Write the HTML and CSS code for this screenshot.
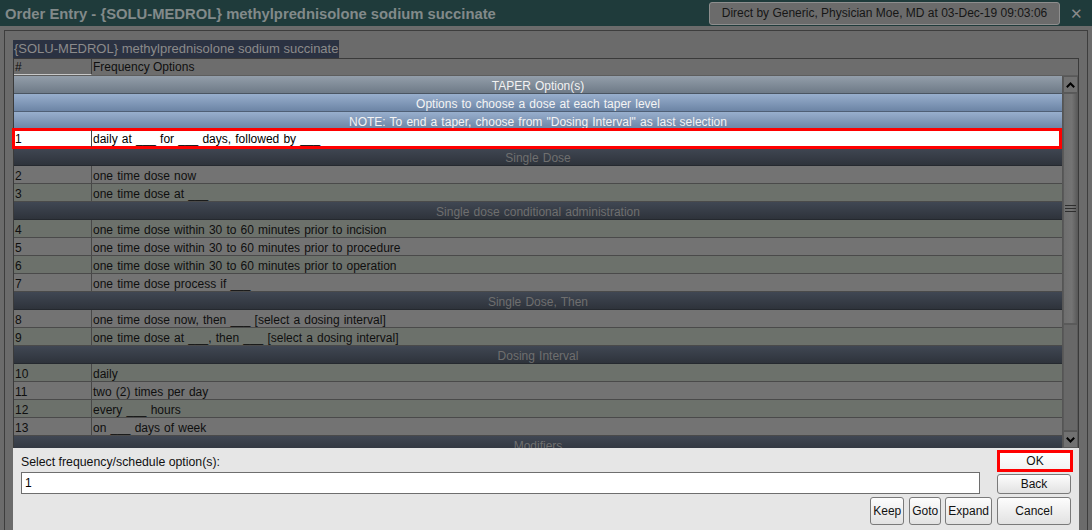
FILE: index.html
```html
<!DOCTYPE html>
<html>
<head>
<meta charset="utf-8">
<title>Order Entry</title>
<link rel="stylesheet" href="styles.css">
</head>
<body>
<div class="titlebar">
  <div class="title">Order Entry - {SOLU-MEDROL} methylprednisolone sodium succinate</div>
  <div class="tb-right">
    <div class="ctx-btn">Direct by Generic, Physician Moe, MD at 03-Dec-19 09:03:06</div>
    <span class="close">✕</span>
  </div>
</div>
<div class="frame">
  <div class="drug"><span class="drug-label">{SOLU-MEDROL} methylprednisolone sodium succinate</span></div>
  <div class="table">
    <div class="thead">
      <div class="c1">#</div>
      <div class="c2">Frequency Options</div>
    </div>
    <div class="tbody">
      <div class="rows">
        <div class="sec taper">TAPER Option(s)</div>
        <div class="sec blue">Options to choose a dose at each taper level</div>
        <div class="sec blue">NOTE: To end a taper, choose from "Dosing Interval" as last selection</div>
        <div class="row selected"><div class="c1">1</div><div class="c2">daily at ___ for ___ days, followed by ___</div></div>
        <div class="sec dark">Single Dose</div>
        <div class="row gray"><div class="c1">2</div><div class="c2">one time dose now</div></div>
        <div class="row green"><div class="c1">3</div><div class="c2">one time dose at ___</div></div>
        <div class="sec dark">Single dose conditional administration</div>
        <div class="row green"><div class="c1">4</div><div class="c2">one time dose within 30 to 60 minutes prior to incision</div></div>
        <div class="row gray"><div class="c1">5</div><div class="c2">one time dose within 30 to 60 minutes prior to procedure</div></div>
        <div class="row green"><div class="c1">6</div><div class="c2">one time dose within 30 to 60 minutes prior to operation</div></div>
        <div class="row gray"><div class="c1">7</div><div class="c2">one time dose process if ___</div></div>
        <div class="sec dark">Single Dose, Then</div>
        <div class="row gray"><div class="c1">8</div><div class="c2">one time dose now, then ___ [select a dosing interval]</div></div>
        <div class="row green"><div class="c1">9</div><div class="c2">one time dose at ___, then ___ [select a dosing interval]</div></div>
        <div class="sec dark">Dosing Interval</div>
        <div class="row green"><div class="c1">10</div><div class="c2">daily</div></div>
        <div class="row gray"><div class="c1">11</div><div class="c2">two (2) times per day</div></div>
        <div class="row green"><div class="c1">12</div><div class="c2">every ___ hours</div></div>
        <div class="row gray"><div class="c1">13</div><div class="c2">on ___ days of week</div></div>
        <div class="sec dark">Modifiers</div>
      </div>
      <div class="scrollbar">
        <div class="sb-btn">
          <svg width="9" height="6" viewBox="0 0 9 6"><polyline points="0.8,5.2 4.5,1.5 8.2,5.2" fill="none" stroke="#000" stroke-width="2"/></svg>
        </div>
        <div class="sb-thumb">
          <svg width="11" height="8" viewBox="0 0 11 8"><path d="M0 0.5H11M0 3.5H11M0 6.5H11" stroke="#2e2e2e" stroke-width="1"/></svg>
        </div>
        <div class="sb-track"></div>
        <div class="sb-btn">
          <svg width="9" height="6" viewBox="0 0 9 6"><polyline points="0.8,0.8 4.5,4.5 8.2,0.8" fill="none" stroke="#000" stroke-width="2"/></svg>
        </div>
      </div>
    </div>
  </div>
  <div class="bottom">
    <div class="label">Select frequency/schedule option(s):</div>
    <button class="btn ok">OK</button>
    <div class="input">1</div>
    <button class="btn back">Back</button>
    <div class="actions">
      <button class="btn small">Keep</button>
      <button class="btn small goto">Goto</button>
      <button class="btn small">Expand</button>
    </div>
    <button class="btn cancel">Cancel</button>
  </div>
</div>
</body>
</html>
```
FILE: styles.css
```css
* { box-sizing: border-box; }
html, body {
  margin: 0;
  padding: 0;
  width: 1092px;
  height: 530px;
  overflow: hidden;
  background: #6b6b6b;
  font-family: "Liberation Sans", Arial, sans-serif;
  font-size: 12px;
  color: #0f0f0f;
}

/* title bar */
.titlebar {
  height: 26px;
  background: #1f3b3b;
  display: flex;
  align-items: center;
  justify-content: space-between;
  padding: 0 9px 0 5px;
}
.title {
  font-size: 14.8px;
  font-weight: bold;
  color: #828a8a;
  padding-top: 1px;
}
.tb-right {
  display: flex;
  align-items: center;
  gap: 10px;
}
.ctx-btn {
  height: 23px;
  width: 351px;
  margin-top: 1px;
  background: #6b6b6b;
  border: 1px solid #8e8e8e;
  border-radius: 3px;
  color: #161616;
  font-size: 12px;
  line-height: 21px;
  text-align: center;
}
.close {
  color: #8a8a8a;
  font-size: 15px;
  line-height: 1;
}

/* main frame */
.frame {
  margin: 4px 4px 0 4px;
  height: 500px;
  border: 1px solid #3d3d3d;
  border-bottom: none;
  padding: 9px 8px 0 8px;
  overflow: hidden;
}
.drug {
  height: 18px;
  display: flex;
}
.drug-label {
  background: #2b3242;
  color: #8b8b8b;
  font-size: 13px;
  line-height: 18px;
  padding: 0 1px 0 1px;
}

/* table */
.table {
  border-top: 1px solid #3a3a3a;
  border-left: 1px solid #3a3a3a;
  border-right: 1px solid #3a3a3a;
}
.thead {
  display: flex;
  height: 17px;
  background: #6d6d6d;
  border-bottom: 1px solid #5d5d5d;
  line-height: 16px;
}
.thead .c1 {
  width: 78px;
  border-right: 1px solid #3f3f3f;
  border-bottom: 1px solid #c8c8c8;
  padding-left: 1px;
}
.thead .c2 { padding-left: 1px; }

.tbody {
  display: flex;
  height: 372px;
}
.rows {
  flex: 1;
  height: 372px;
  clip-path: inset(0 0 0 -3px);
  display: flex;
  flex-direction: column;
  word-spacing: 0.8px;
}
.row, .sec {
  flex: none;
  height: 18px;
  border-bottom: 1px solid #4a4a4a;
  padding-top: 2px;
  line-height: 16px;
}
.row { display: flex; }
.row .c1 {
  width: 78px;
  border-right: 1px solid #474747;
  padding-left: 1px;
  margin-top: -2px;
  padding-top: 2px;
}
.row .c2 { padding-left: 1px; }
.row.gray { background: #737373; }
.row.green { background: #6c716b; }
.row.selected {
  background: #ffffff;
  color: #000;
  position: relative;
  z-index: 0;
  padding-top: 1px;
}
.row.selected .c1 { margin-top: -1px; padding-top: 1px; }
.row.selected::after {
  content: "";
  position: absolute;
  z-index: -1;
  left: -2px;
  right: 0;
  top: -2px;
  bottom: -2px;
  border: 3px solid #ff0000;
}
.sec { text-align: center; }
.sec.taper {
  background: linear-gradient(#939eaa, #6e7a87);
  color: #f2f2f2;
  border-bottom-color: #4a5562;
}
.sec.blue {
  background: linear-gradient(#98afcd, #6c84a5);
  color: #f4f4f4;
  border-bottom-color: #4f5f75;
}
.sec.dark {
  background: linear-gradient(#404753, #2e333b);
  color: #6f6f6f;
  border-bottom-color: #25292f;
}

/* scrollbar */
.scrollbar {
  width: 16px;
  display: flex;
  flex-direction: column;
  background: #676767;
  border-left: 1px solid #555;
}
.sb-btn {
  height: 17px;
  background: #717171;
  border: 1px solid #585858;
  display: flex;
  align-items: center;
  justify-content: center;
}
.sb-thumb {
  height: 231px;
  background: linear-gradient(90deg, #6e6e6e 0, #747474 60%, #5c5c5c 100%);
  border: 1px solid #5a5a5a;
  display: flex;
  align-items: center;
  justify-content: center;
}
.sb-track {
  flex: 1;
  background: #686868;
  border: 1px solid #5a5a5a;
}

/* bottom panel */
.bottom {
  height: 82px;
  background: #e6e6e6;
  display: grid;
  grid-template-columns: 1fr 76px;
  grid-template-rows: 22px 20px 28px;
  row-gap: 2px;
  column-gap: 5px;
  padding: 2px 6px 0 8px;
}
.label {
  align-self: center;
  padding-top: 1px;
  color: #111;
  font-size: 12.3px;
}
.input {
  margin-top: -2px;
  height: 22px;
  margin-right: 12px;
  background: #fff;
  border: 1px solid #6e6e6e;
  line-height: 20px;
  padding-left: 3px;
  color: #000;
}
.actions {
  display: flex;
  justify-content: flex-end;
  gap: 4px;
  margin-top: 1px;
}
.btn {
  font-family: "Liberation Sans", Arial, sans-serif;
  font-size: 12px;
  color: #111;
  background: linear-gradient(#fdfdfd, #e2e2e2);
  border: 1px solid #7a7a7a;
  border-radius: 3px;
  padding: 0 2px;
  margin: 0;
  line-height: 1;
}
.btn.small { height: 28px; }
.btn.goto { margin-left: 1px; }
.btn.ok {
  height: 22px;
  width: 76px;
  border: 3px solid #ff0000;
  border-radius: 0;
  background: linear-gradient(#ffffff, #f2f2f2);
}
.btn.back { width: 74px; height: 20px; }
.btn.cancel { width: 74px; height: 28px; margin-top: 1px; }
```
